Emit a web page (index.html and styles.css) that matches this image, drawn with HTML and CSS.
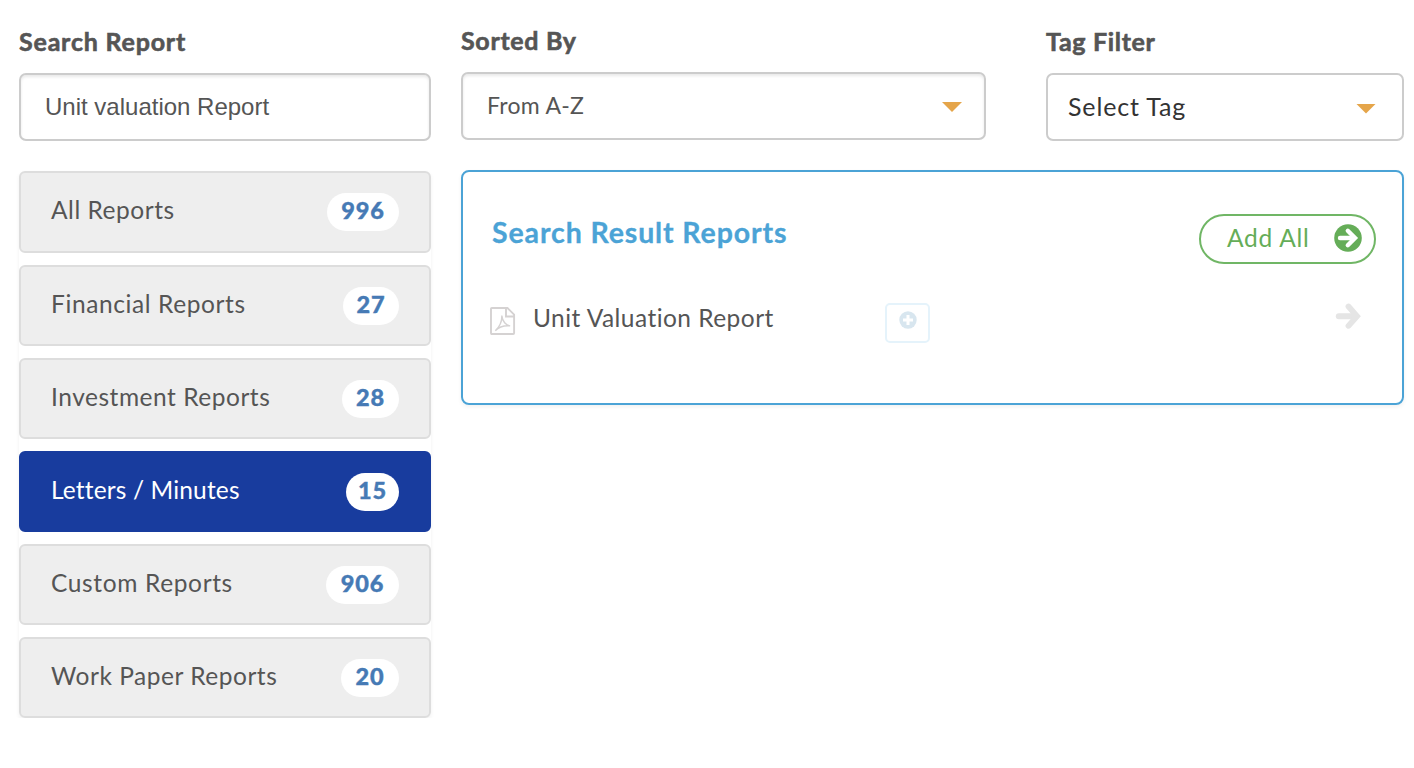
FILE: index.html
```html
<!DOCTYPE html>
<html lang="en">
<head>
<meta charset="utf-8">
<title>Reports</title>
<link rel="stylesheet" href="styles.css">
</head>
<body>
<main class="page">
  <aside class="sidebar">
    <label class="label label-search" for="search">Search Report</label>
    <input class="field search" id="search" type="text" value="Unit valuation Report">
    <nav class="categories">
      <a class="category all"><span>All Reports</span><b class="badge w72">996</b></a>
      <a class="category financial"><span>Financial Reports</span><b class="badge w56">27</b></a>
      <a class="category"><span>Investment Reports</span><b class="badge w57">28</b></a>
      <a class="category active"><span>Letters / Minutes</span><b class="badge w53">15</b></a>
      <a class="category custom"><span>Custom Reports</span><b class="badge w73">906</b></a>
      <a class="category"><span>Work Paper Reports</span><b class="badge w58">20</b></a>
    </nav>
  </aside>
  <section class="content">
    <div class="filters">
      <div class="filter sort">
        <div class="label">Sorted By</div>
        <div class="field select inset"><span class="sort-value">From A-Z</span><i class="caret"></i></div>
      </div>
      <div class="filter tag">
        <div class="label">Tag Filter</div>
        <div class="field select"><span class="tag-value">Select Tag</span><i class="caret"></i></div>
      </div>
    </div>
    <div class="panel">
      <header class="panel-head">
        <h2 class="title">Search Result Reports</h2>
        <button class="add-all"><span>Add All</span>
          <svg class="circle-arrow" viewBox="0 0 28 28"><circle cx="14" cy="14" r="13.8" fill="#65ad58"/><path d="M6 14h13" stroke="#fff" stroke-width="4.4" stroke-linecap="round"/><path d="M13.8 6.8l7.2 7.2-7.2 7.2" fill="none" stroke="#fff" stroke-width="4.4" stroke-linecap="round"/></svg>
        </button>
      </header>
      <div class="report">
        <svg class="pdf" viewBox="0 0 26 28" fill="none" stroke="#d5d2d2"><path d="M1.9 1h15.600l6.600 6.600v18.500q0 .9-.9.9H1.900q-.9 0-.9-.9V1.900q0-.9.9-.9zM16 1v8.500h8" stroke-width="1.9"/><path d="M11.800 8.500c.3 5-1.500 10.500-6.500 15.200 3.200-3.400 8.500-5.300 14.900-4.800-4.200-.3-7.800-4.500-8.400-10.400z" stroke-width="1.400"/></svg>
        <span class="report-name">Unit Valuation Report</span>
        <button class="plus"><svg viewBox="0 0 18 18"><circle cx="9" cy="9" r="8.700" fill="#d8e6ef"/><path d="M9 4v10M4 9h10" stroke="#fff" stroke-width="3"/></svg></button>
        <svg class="arrow" viewBox="0 0 26 28"><path d="M3.800 14.200h17" fill="none" stroke="#e5e5e5" stroke-width="6" stroke-linecap="round"/><path d="M13.500 4.500L22 14.200 13.500 23.800" fill="none" stroke="#e5e5e5" stroke-width="5.800" stroke-linecap="round"/></svg>
      </div>
    </div>
  </section>
</main>
</body>
</html>
```
FILE: styles.css
```css
* { box-sizing: border-box; }
body { margin: 0; background: #fff; color: #555; font-family: Lato, "Open Sans", sans-serif; font-size: 24.5px; }
.page { display: flex; gap: 30px; padding: 26px 10px 0 19px; }
.sidebar { width: 412px; padding-top: 1px; }
.content { flex: 1; }
.label { display: block; height: 30px; margin-bottom: 16px; line-height: 28px; font-size: 25px; font-weight: 700; letter-spacing: .68px; -webkit-text-stroke: .6px #555; white-space: nowrap; }
.label-search { letter-spacing: .8px; }
.field { display: flex; width: 100%; height: 68px; border: 2px solid #ccc; border-radius: 7px; background: #fff; align-items: center; }
.search { display: block; padding: 0 24px; box-shadow: inset 0 2px 3px rgba(0,0,0,.09); color: #555; font: 24px "Liberation Sans", Arial, sans-serif; outline: none; }
.inset { box-shadow: inset 0 2px 3px rgba(0,0,0,.09); }
.categories { display: flex; flex-direction: column; gap: 12px; margin-top: 30px; border-radius: 6px; box-shadow: 0 2px 4px rgba(0,0,0,.06); }
.category { display: flex; align-items: center; justify-content: space-between; height: 81px; padding: 0 30px; border: 2px solid #ddd; border-radius: 6px; background: #eee; line-height: 30px; letter-spacing: .53px; white-space: nowrap; }
.category > span { margin-bottom: 3px; }
.all { height: 82px; }
.all > span { margin-bottom: 4px; }
.financial { letter-spacing: .6px; }
.custom { letter-spacing: .64px; }
.active { border-color: #183c9e; background: #183c9e; color: #fff; letter-spacing: .15px; }
.badge { height: 38px; border-radius: 19px; background: #fff; color: #467ab5; font-size: 23.5px; font-weight: 900; line-height: 34px; letter-spacing: .9px; -webkit-text-stroke: .4px #467ab5; text-align: center; }
.w72 { width: 72px; }
.w56 { width: 56px; }
.w57 { width: 57px; }
.w53 { width: 53px; }
.w73 { width: 73px; }
.w58 { width: 58px; }
.filters { display: flex; justify-content: space-between; align-items: flex-start; }
.sort { width: 525px; }
.tag { width: 358px; padding-top: 1px; }
.select { justify-content: space-between; padding: 0 22px 0 24px; line-height: 30px; }
.tag .select { padding: 0 26px 0 20px; color: #333; }
.sort-value { margin-bottom: 3px; font-size: 23px; letter-spacing: .3px; }
.tag-value { margin-bottom: 2px; font-size: 25px; letter-spacing: .85px; }
.caret { width: 20px; height: 10px; margin-top: 2px; background: #e5a54a; clip-path: polygon(0 0, 100% 0, 50% 100%); }
.tag .caret { margin-top: 3px; }
.panel { height: 235px; margin-top: 29px; padding: 42px 26px 0 28px; border: 2px solid #4ba3d6; border-radius: 8px; box-shadow: 0 2px 4px rgba(0,0,0,.06); }
.panel-head { display: flex; justify-content: space-between; }
.title { margin: 0; padding: 1px 0 0 1px; font-size: 28.5px; line-height: 34px; font-weight: 700; letter-spacing: .88px; color: #4ba3d6; -webkit-text-stroke: .3px #4ba3d6; }
.add-all { display: flex; align-items: flex-start; justify-content: space-between; width: 177px; height: 50px; padding: 7px 12px 0 26px; border: 2px solid #70b665; border-radius: 25px; background: #fff; color: #65ad58; font: 24.5px/30px Lato, sans-serif; letter-spacing: .75px; white-space: nowrap; }
.circle-arrow { width: 28px; height: 28px; margin-top: .5px; }
.report { display: flex; align-items: flex-start; height: 60px; padding-top: 38px; margin-right: 15px; white-space: nowrap; }
.pdf { width: 26px; height: 28px; margin-top: 5px; margin-left: -1px; flex: none; }
.report-name { width: 352px; margin: 1px 0 0 17px; line-height: 30px; letter-spacing: .46px; }
.plus { display: flex; align-items: flex-start; justify-content: center; width: 45px; height: 40px; margin-top: 1px; padding: 6px 0 0; border: 2px solid #e5f3fb; border-radius: 5px; background: #fff; }
.plus svg { width: 18px; height: 18px; }
.arrow { width: 26px; height: 28px; margin-left: auto; }
```
